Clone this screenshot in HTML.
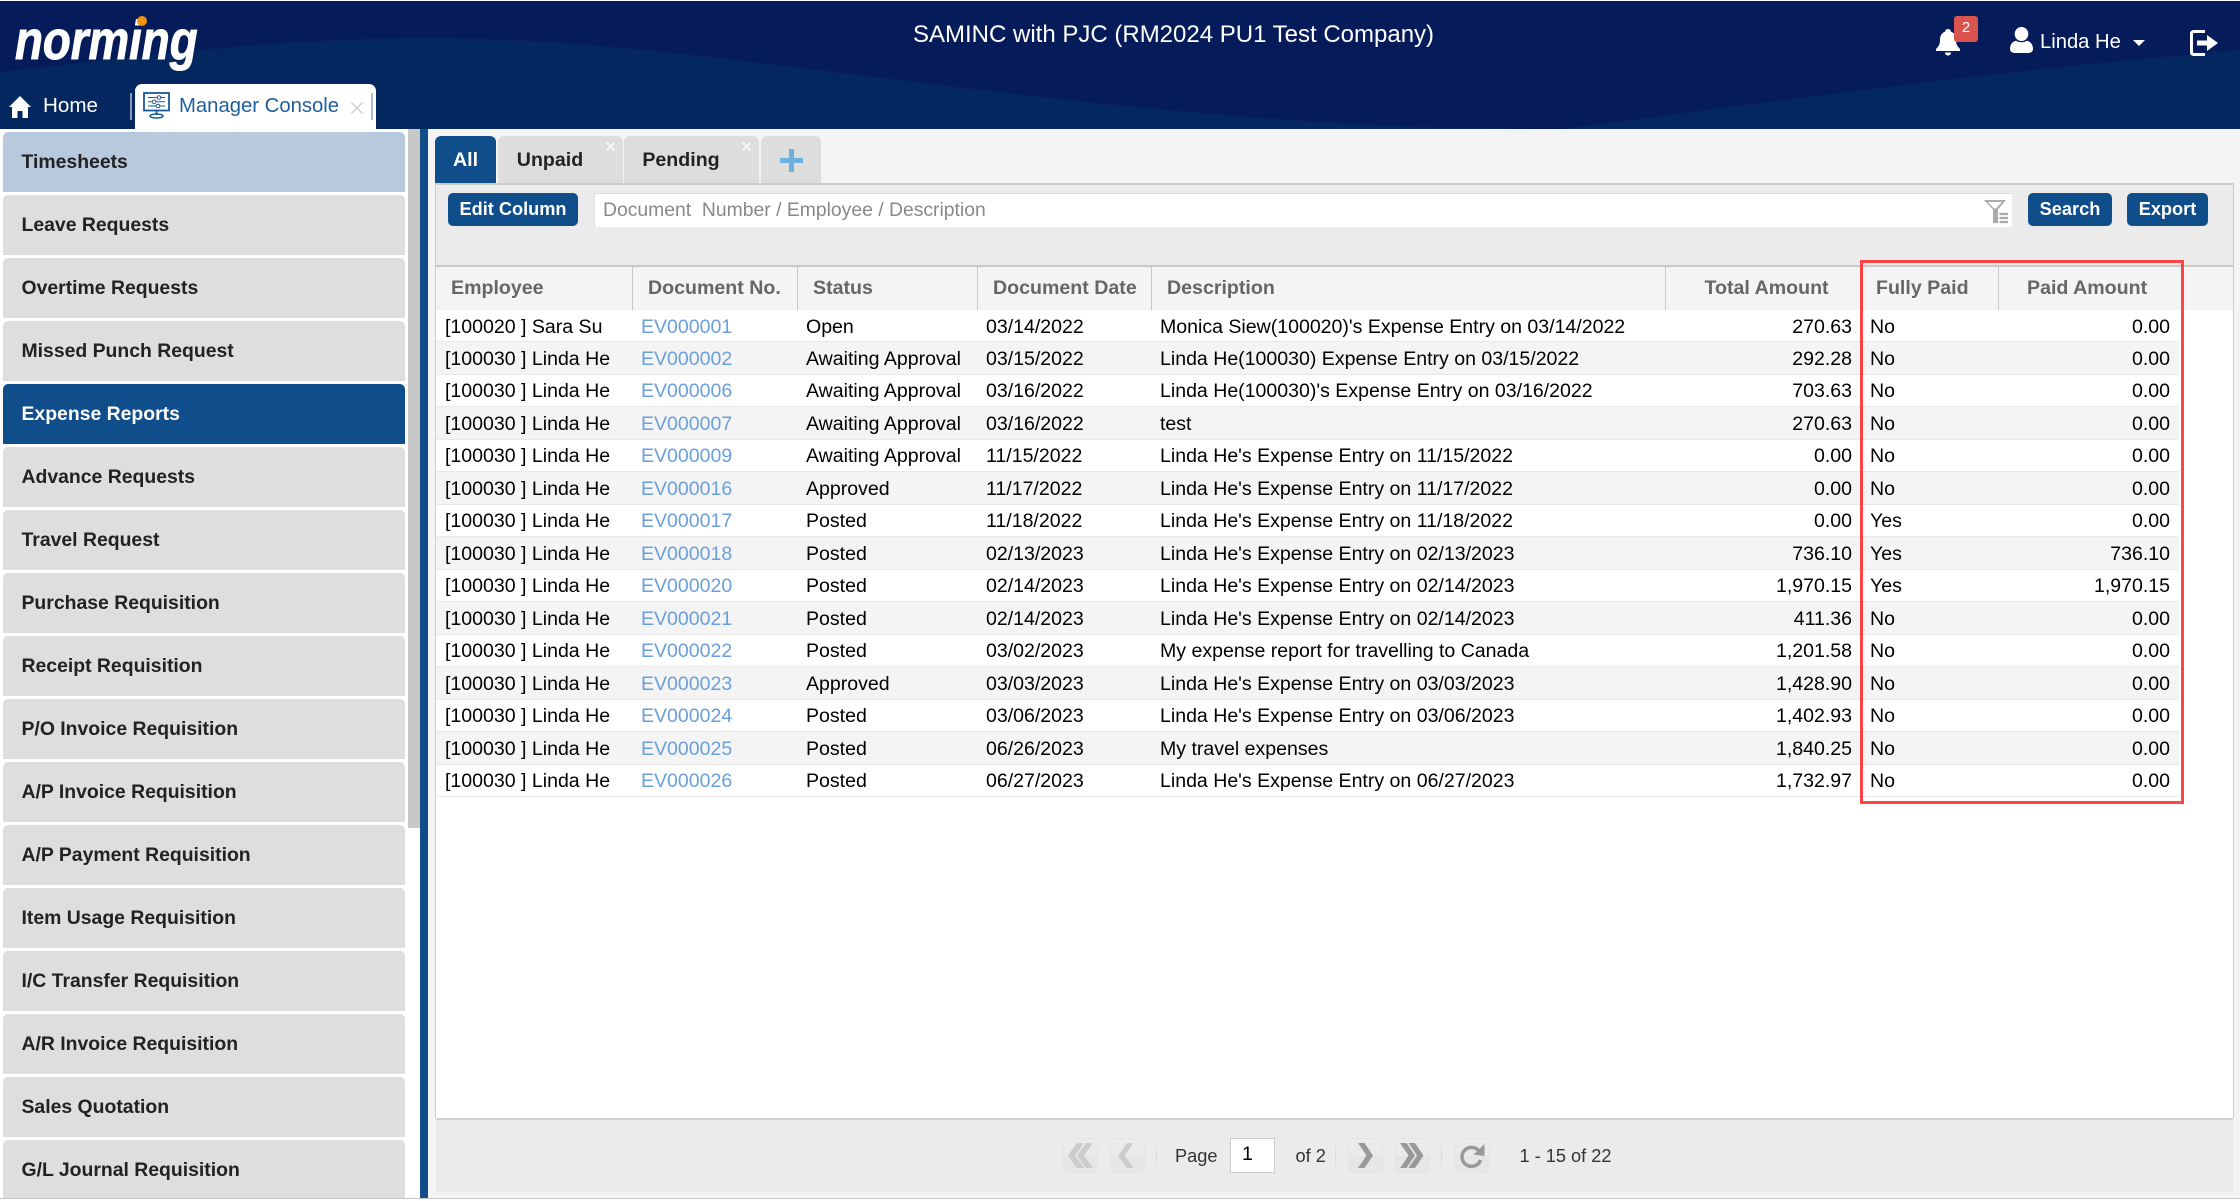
<!DOCTYPE html>
<html lang="en"><head><meta charset="utf-8"><title>Manager Console</title>
<style>
*{box-sizing:border-box}
html,body{margin:0;padding:0;width:2240px;height:1199px;overflow:hidden;background:#fff;font-family:"Liberation Sans",sans-serif}
.a{position:absolute;white-space:pre}
#hdr{position:absolute;left:0;top:1px;width:2240px;height:128px}
.it{position:absolute;left:3px;width:402px;height:60px;background:#dedede;border-radius:5px 5px 0 0;font-weight:bold;font-size:19.4px;line-height:61px;padding-left:18.5px;color:#222}
.tb{position:absolute;top:136px;height:47px;background:#ddd;border-radius:6px 6px 0 0;font-weight:bold;font-size:19.6px;line-height:49px;color:#222;text-align:center}
.x{position:absolute;top:140px;color:#fff;font-size:19px;line-height:16px;font-weight:normal}
.btn{position:absolute;top:193px;height:33px;background:#104e8b;border-radius:5px;color:#fff;font-weight:bold;font-size:18.2px;line-height:32px;text-align:center}
.th{position:absolute;top:267px;height:43px;line-height:42px;font-weight:bold;font-size:19.6px;color:#666;white-space:pre}
.sep{position:absolute;top:267px;height:43px;width:1px;background:#c8c8c8}
#rows{position:absolute;left:436px;top:310px;width:1743px;height:487px;display:flex;flex-direction:column}
.r{position:relative;flex:1 1 0;border-bottom:1px solid #e9e9e9;font-size:19.55px;color:#000;line-height:32px}
.r:nth-child(even){background:#f4f4f4}
.r span{position:absolute;top:.5px;white-space:pre}
.r span:nth-child(1){left:9px}
.r span:nth-child(2){left:205px;color:#6a9fdb}
.r span:nth-child(3){left:370px}
.r span:nth-child(4){left:550px}
.r span:nth-child(5){left:724px}
.r span:nth-child(6){right:327px}
.r span:nth-child(7){left:1434px}
.r span:nth-child(8){right:9px}
.pb{position:absolute;top:1138px;width:35px;height:35px;border:1px solid #e4e4e4;border-radius:4px;background:linear-gradient(#ebebeb 50%,#e6e6e6 50%)}
.pb svg{position:absolute;left:-1px;top:-1px}
.ps{position:absolute;top:1146px;width:1px;height:20px;background:#dcdcdc}
.pt{position:absolute;top:1143px;font-size:18.2px;line-height:26px;color:#333;white-space:pre}
</style></head><body>

<svg id="hdr" width="2240" height="128" viewBox="0 1 2240 128"><rect y="0" width="2240" height="130" fill="#061c5a"/><path d="M0 72C150 55 280 38 430 38C700 38 1000 110 1420 127L1560 129C1750 105 1950 75 2240 50L2240 130L0 130Z" fill="#04275f"/></svg>

<!-- logo -->
<div class="a" style="left:15px;top:5px;font:italic bold 55px/70px 'Liberation Sans',sans-serif;color:#fff;transform:scaleX(.83);transform-origin:0 0;-webkit-text-stroke:1px #fff">norming</div>
<div class="a" style="left:137px;top:16px;width:10px;height:10px;border-radius:50%;background:#f0930f"></div>

<div class="a" style="left:913px;top:20px;color:#fff;font-size:24px;line-height:30px">SAMINC with PJC (RM2024 PU1 Test Company)</div>

<!-- bell -->
<svg class="a" style="left:1936px;top:29px" width="24" height="27" viewBox="0 0 24 27"><path fill="#fff" d="M12 0c1.6 0 2.8 1.1 2.9 2.6C18.700 3.900 20 7.200 20 11c0 4 1 6 4 9v2H0v-2c3-3 4-5 4-9 0-3.800 1.300-7.100 5.100-8.400C9.200 1.100 10.400 0 12 0zM9 23.500h6C15 25.400 13.700 26.500 12 26.500S9 25.400 9 23.500z"/></svg>
<div class="a" style="left:1954px;top:16px;width:24px;height:26px;background:#d9534f;border-radius:3px;color:#fff;font-size:15px;line-height:24px;text-align:center">2</div>
<!-- user -->
<svg class="a" style="left:2010px;top:27px" width="23" height="26" viewBox="0 0 23 26"><ellipse cx="11.500" cy="7" rx="6.800" ry="7" fill="#fff"/><path fill="#fff" d="M0 22c0-4.500 2.500-7.500 6-8.300 3.300 2 7.700 2 11 0 3.500.8 6 3.800 6 8.300 0 3-3 4-5 4H5c-2 0-5-1-5-4z"/></svg>
<div class="a" style="left:2040px;top:27px;color:#fff;font-size:20.2px;line-height:30px">Linda He</div>
<svg class="a" style="left:2133px;top:40px" width="12" height="6" viewBox="0 0 12 6"><path d="M0 0h12L6 6z" fill="#fff"/></svg>
<!-- logout -->
<svg class="a" style="left:2190px;top:30px" width="28" height="26" viewBox="0 0 28 26"><path d="M15 1.500H4Q1.500 1.500 1.500 4V22Q1.500 24.500 4 24.500H15" fill="none" stroke="#fff" stroke-width="3"/><path d="M7 10.500H17V5L28 13 17 21V15.500H7Z" fill="#fff"/></svg>

<!-- top tabs -->
<svg class="a" style="left:9px;top:96px" width="22" height="22" viewBox="0 0 22 22"><path fill="#fff" d="M11 0 22 11H19V22H13.500V15H8.500V22H3V11H0Z"/></svg>
<div class="a" style="left:43px;top:91px;color:#fff;font-size:20.600px;line-height:30px">Home</div>
<div class="a" style="left:130px;top:93px;width:2px;height:27px;background:#8a9ab5"></div>
<div class="a" style="left:135px;top:84px;width:241px;height:45px;background:#fff;border-radius:7px 7px 0 0"></div>
<svg class="a" style="left:143px;top:92px" width="27" height="27" viewBox="0 0 27 27" fill="none" stroke="#1c5a96"><rect x="1" y="1" width="25" height="17.500" stroke-width="1.800"/><path d="M5 5.500H22M5 9.800H22M5 14H22" stroke-width="1"/><circle cx="16" cy="5.500" r="1.800" fill="#fff"/><circle cx="11" cy="9.800" r="1.800" fill="#fff"/><circle cx="15" cy="14" r="1.800" fill="#fff"/><path d="M13.500 18.500V23" stroke-width="1.800"/><ellipse cx="13.500" cy="24" rx="6.500" ry="2" stroke-width="1.500"/></svg>
<div class="a" style="left:179px;top:91px;color:#1f5f9f;font-size:20.3px;line-height:30px">Manager Console</div>
<svg class="a" style="left:351px;top:102px" width="12" height="12" viewBox="0 0 12 12"><path d="M.5.500 11.500 11.500M11.500.500 .5 11.500" stroke="#ccc" stroke-width="1.300"/></svg>
<div class="a" style="left:371px;top:93px;width:2px;height:27px;background:#a9bdd3"></div>

<!-- sidebar -->
<div class="it" style="top:132px;background:#b8c9de">Timesheets</div>
<div class="it" style="top:195px">Leave Requests</div>
<div class="it" style="top:258px">Overtime Requests</div>
<div class="it" style="top:321px">Missed Punch Request</div>
<div class="it" style="top:384px;background:#104e8b;color:#fff">Expense Reports</div>
<div class="it" style="top:447px">Advance Requests</div>
<div class="it" style="top:510px">Travel Request</div>
<div class="it" style="top:573px">Purchase Requisition</div>
<div class="it" style="top:636px">Receipt Requisition</div>
<div class="it" style="top:699px">P/O Invoice Requisition</div>
<div class="it" style="top:762px">A/P Invoice Requisition</div>
<div class="it" style="top:825px">A/P Payment Requisition</div>
<div class="it" style="top:888px">Item Usage Requisition</div>
<div class="it" style="top:951px">I/C Transfer Requisition</div>
<div class="it" style="top:1014px">A/R Invoice Requisition</div>
<div class="it" style="top:1077px">Sales Quotation</div>
<div class="it" style="top:1140px;height:58px">G/L Journal Requisition</div>
<div class="a" style="left:408px;top:129px;width:12px;height:699px;background:#c8c8c8"></div>
<div class="a" style="left:420px;top:129px;width:8px;height:1069px;background:#104e8b"></div>

<!-- main -->
<div class="a" style="left:428px;top:129px;width:1812px;height:1069px;background:#f4f4f4"></div>
<div class="tb" style="left:435px;width:61px;background:#104e8b;color:#fff">All</div>
<div class="tb" style="left:498px;width:125px;padding-right:21px">Unpaid</div>
<div class="x" style="left:605px">×</div>
<div class="tb" style="left:624px;width:135px;padding-right:21px">Pending</div>
<div class="x" style="left:741px">×</div>
<div class="tb" style="left:761px;width:60px"></div>
<svg class="a" style="left:780px;top:149px" width="23" height="23" viewBox="0 0 23 23"><path d="M9 0h5v9h9v5h-9v9H9v-9H0V9h9z" fill="#6cb2dd"/></svg>

<div class="a" style="left:435px;top:183px;width:1799px;height:935px;background:#fff;border:solid #ccc;border-width:2px 1px 0 1px"></div>
<div class="a" style="left:436px;top:185px;width:1797px;height:80px;background:#ebebeb"></div>
<div class="a" style="left:436px;top:265px;width:1797px;height:2px;background:#c8c8c8"></div>
<div class="a" style="left:436px;top:267px;width:1797px;height:43px;background:#f4f4f4"></div>

<div class="btn" style="left:448px;width:130px">Edit Column</div>
<div class="a" style="left:594px;top:193px;width:1418px;height:34px;background:#fff;border-left:1px solid #ddd;border-top:1px solid #ddd"></div>
<div class="a" style="left:603px;top:195px;color:#888;font-size:19.350px;line-height:30px">Document  Number / Employee / Description</div>
<svg class="a" style="left:1984px;top:200px" width="24" height="24" viewBox="0 0 24 24"><path d="M0 0H22L14 9.500V23H9V9.500Z" fill="#aaa"/><path d="M4 2H18L12 8.500H10Z" fill="#fff"/><path d="M15.500 14H24M15.500 18H24M15.500 22H24" stroke="#aaa" stroke-width="2.200"/></svg>
<div class="btn" style="left:2028px;width:84px">Search</div>
<div class="btn" style="left:2127px;width:81px">Export</div>

<div class="sep" style="left:632px"></div><div class="sep" style="left:797px"></div><div class="sep" style="left:977px"></div><div class="sep" style="left:1151px"></div><div class="sep" style="left:1665px"></div><div class="sep" style="left:1998px"></div>
<div class="th" style="left:451px">Employee</div>
<div class="th" style="left:648px">Document No.</div>
<div class="th" style="left:813px">Status</div>
<div class="th" style="left:993px">Document Date</div>
<div class="th" style="left:1167px">Description</div>
<div class="th" style="left:1704.5px">Total Amount</div>
<div class="th" style="left:1876px">Fully Paid</div>
<div class="th" style="left:2027px">Paid Amount</div>

<div id="rows">
<div class="r"><span>[100020 ] Sara Su</span><span>EV000001</span><span>Open</span><span>03/14/2022</span><span>Monica Siew(100020)'s Expense Entry on 03/14/2022</span><span>270.63</span><span>No</span><span>0.00</span></div>
<div class="r"><span>[100030 ] Linda He</span><span>EV000002</span><span>Awaiting Approval</span><span>03/15/2022</span><span>Linda He(100030) Expense Entry on 03/15/2022</span><span>292.28</span><span>No</span><span>0.00</span></div>
<div class="r"><span>[100030 ] Linda He</span><span>EV000006</span><span>Awaiting Approval</span><span>03/16/2022</span><span>Linda He(100030)'s Expense Entry on 03/16/2022</span><span>703.63</span><span>No</span><span>0.00</span></div>
<div class="r"><span>[100030 ] Linda He</span><span>EV000007</span><span>Awaiting Approval</span><span>03/16/2022</span><span>test</span><span>270.63</span><span>No</span><span>0.00</span></div>
<div class="r"><span>[100030 ] Linda He</span><span>EV000009</span><span>Awaiting Approval</span><span>11/15/2022</span><span>Linda He's Expense Entry on 11/15/2022</span><span>0.00</span><span>No</span><span>0.00</span></div>
<div class="r"><span>[100030 ] Linda He</span><span>EV000016</span><span>Approved</span><span>11/17/2022</span><span>Linda He's Expense Entry on 11/17/2022</span><span>0.00</span><span>No</span><span>0.00</span></div>
<div class="r"><span>[100030 ] Linda He</span><span>EV000017</span><span>Posted</span><span>11/18/2022</span><span>Linda He's Expense Entry on 11/18/2022</span><span>0.00</span><span>Yes</span><span>0.00</span></div>
<div class="r"><span>[100030 ] Linda He</span><span>EV000018</span><span>Posted</span><span>02/13/2023</span><span>Linda He's Expense Entry on 02/13/2023</span><span>736.10</span><span>Yes</span><span>736.10</span></div>
<div class="r"><span>[100030 ] Linda He</span><span>EV000020</span><span>Posted</span><span>02/14/2023</span><span>Linda He's Expense Entry on 02/14/2023</span><span>1,970.15</span><span>Yes</span><span>1,970.15</span></div>
<div class="r"><span>[100030 ] Linda He</span><span>EV000021</span><span>Posted</span><span>02/14/2023</span><span>Linda He's Expense Entry on 02/14/2023</span><span>411.36</span><span>No</span><span>0.00</span></div>
<div class="r"><span>[100030 ] Linda He</span><span>EV000022</span><span>Posted</span><span>03/02/2023</span><span>My expense report for travelling to Canada</span><span>1,201.58</span><span>No</span><span>0.00</span></div>
<div class="r"><span>[100030 ] Linda He</span><span>EV000023</span><span>Approved</span><span>03/03/2023</span><span>Linda He's Expense Entry on 03/03/2023</span><span>1,428.90</span><span>No</span><span>0.00</span></div>
<div class="r"><span>[100030 ] Linda He</span><span>EV000024</span><span>Posted</span><span>03/06/2023</span><span>Linda He's Expense Entry on 03/06/2023</span><span>1,402.93</span><span>No</span><span>0.00</span></div>
<div class="r"><span>[100030 ] Linda He</span><span>EV000025</span><span>Posted</span><span>06/26/2023</span><span>My travel expenses</span><span>1,840.25</span><span>No</span><span>0.00</span></div>
<div class="r"><span>[100030 ] Linda He</span><span>EV000026</span><span>Posted</span><span>06/27/2023</span><span>Linda He's Expense Entry on 06/27/2023</span><span>1,732.97</span><span>No</span><span>0.00</span></div>
</div>

<div class="a" style="left:1860px;top:260px;width:324px;height:544px;border:3px solid #f44"></div>

<!-- pager -->
<div class="a" style="left:436px;top:1118px;width:1797px;height:74px;background:#ebebeb;border-top:2px solid #d0d0d0"></div>
<div class="pb" style="left:1063px"><svg width="35" height="35" viewBox="0 0 35 35"><path d="M14 5 5 17.500 14 30H21L12 17.500 21 5ZM23 5 14 17.500 23 30H30L21 17.500 30 5Z" fill="#ccc"/></svg></div>
<div class="pb" style="left:1110px"><svg width="35" height="35" viewBox="0 0 35 35"><path d="M17 5 8 17.500 17 30H23.500L14.500 17.500 23.500 5Z" fill="#ccc"/></svg></div>
<div class="ps" style="left:1156px"></div>
<div class="pt" style="left:1175px">Page</div>
<div class="a" style="left:1230px;top:1138px;width:45px;height:35px;background:#fff;border:1px solid #ccc;font-size:19.600px;line-height:30px;padding-left:11px;color:#000">1</div>
<div class="pt" style="left:1295.5px">of 2</div>
<div class="ps" style="left:1335px"></div>
<div class="pb" style="left:1348px"><svg width="35" height="35" viewBox="0 0 35 35"><path d="M10 5 18.500 17.500 10 30H16.500L25 17.500 16.500 5Z" fill="#999"/></svg></div>
<div class="pb" style="left:1395px"><svg width="35" height="35" viewBox="0 0 35 35"><path d="M5 5 13.500 17.500 5 30H11.500L20 17.500 11.500 5ZM13.500 5 22 17.500 13.500 30H20L28.500 17.500 20 5Z" fill="#999"/></svg></div>
<div class="ps" style="left:1441px"></div>
<div class="pb" style="left:1455px"><svg width="35" height="35" viewBox="0 0 35 35"><path d="M24 13A9.500 9.500 0 1 0 25.500 22" fill="none" stroke="#999" stroke-width="3.500"/><path d="M18.500 16.500 29.500 18V6Z" fill="#999"/></svg></div>
<div class="pt" style="left:1519.5px">1 - 15 of 22</div>
<div class="a" style="left:0;top:1198px;width:2240px;height:1px;background:#c8c8c8"></div>
</body></html>
